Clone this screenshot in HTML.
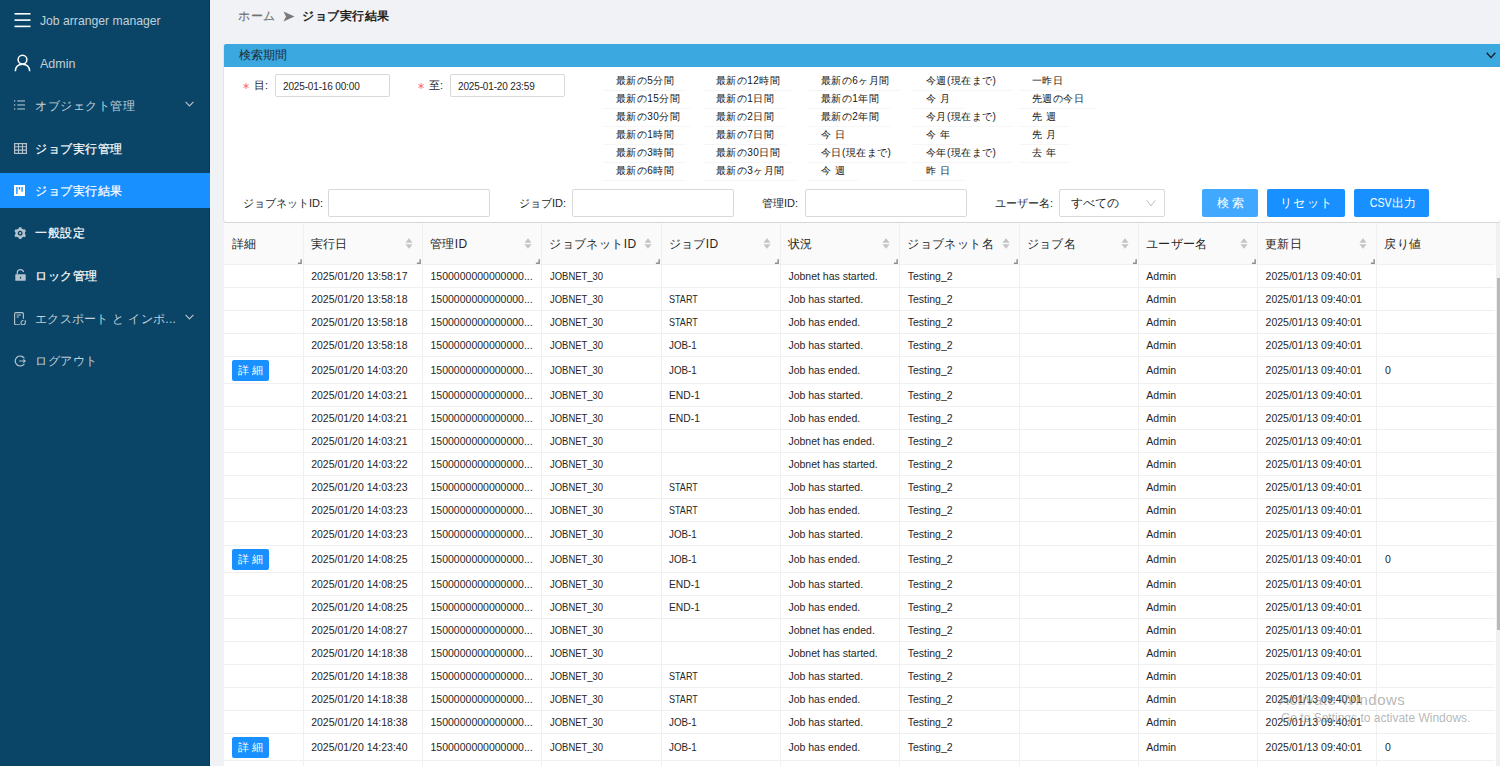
<!DOCTYPE html><html><head><meta charset="utf-8"><style>
*{margin:0;padding:0;box-sizing:border-box}
html,body{width:1500px;height:766px;overflow:hidden;background:#f0f2f5;font-family:"Liberation Sans", sans-serif;color:#262626}
.a{position:absolute;white-space:nowrap}
#side{position:absolute;left:0;top:0;width:210px;height:766px;background:#0a4567;box-shadow:inset -1px 0 0 #06395a}
.si{position:absolute;left:0;width:210px;height:35px;color:rgba(255,255,255,0.7);font-size:12px}
.si .t{position:absolute;left:35px;top:1px;line-height:35px;white-space:nowrap;letter-spacing:0.5px}
.si svg{position:absolute}
#panel{position:absolute;left:224px;top:44px;width:1276px;height:178px;background:#fff;border-radius:2px;box-shadow:0 1px 1px rgba(0,0,0,0.12),-0.5px 0 1px rgba(0,0,0,0.05)}
#phead{position:absolute;left:0;top:0;width:1276px;height:23px;background:#3ba8e0;border-radius:2px 0 0 0}
.inp{position:absolute;background:#fff;border:1px solid #d9d9d9;border-radius:2px}
.btn{position:absolute;top:145px;height:28px;border-radius:2px;background:#1890ff;color:#fff;font-size:12px;text-align:center;line-height:28px;white-space:nowrap}
.lbl{position:absolute;font-size:11px;color:#262626;white-space:nowrap;line-height:14px}
.q{position:absolute;font-size:10px;color:#141414;line-height:14px;white-space:nowrap;letter-spacing:0.45px}
.ql{position:absolute;height:1px;background:#f6f6f6}
#tbl{position:absolute;left:224px;top:223px;width:1272px;height:543px;background:#fff}
.th{position:absolute;font-size:12px;letter-spacing:0.4px;color:#262626;white-space:nowrap;line-height:14px}
.vl{position:absolute;width:1px;background:#f0f0f0}
.hl{position:absolute;height:1px;background:#f0f0f0}
.td{position:absolute;font-size:10.5px;color:#262626;white-space:nowrap;line-height:12px}
.db{position:absolute;left:8px;width:37px;height:21px;background:#1890ff;border-radius:2px;color:#fff;font-size:11px;line-height:21px;white-space:nowrap}
</style></head><body><div id="side">
<svg class="a" style="left:14px;top:12px" width="17" height="16" viewBox="0 0 17 16"><rect x="0.5" y="1" width="16" height="1.6" fill="#fff"/><rect x="0.5" y="7.3" width="16" height="1.6" fill="#fff"/><rect x="0.5" y="13.6" width="16" height="1.6" fill="#fff"/></svg>
<div class="a" style="left:40px;top:14px;font-size:12.2px;line-height:14px;color:rgba(255,255,255,0.75)">Job arranger manager</div>
<svg class="a" style="left:14px;top:54px" width="17" height="18" viewBox="0 0 17 18"><circle cx="8.5" cy="5.6" r="4.4" fill="none" stroke="#fff" stroke-width="1.5"/><path d="M1.3 17.2 C1.6 12.6 4.6 10.3 8.5 10.3 C12.4 10.3 15.4 12.6 15.7 17.2" fill="none" stroke="#fff" stroke-width="1.5"/></svg>
<div class="a" style="left:40px;top:57px;font-size:12.5px;line-height:14px;color:rgba(255,255,255,0.75)">Admin</div>
<div class="si" style="top:88px;color:rgba(255,255,255,0.75)"><svg style="left:14px;top:12px" width="12" height="10" viewBox="0 0 12 10"><rect x="0" y="0.3" width="1.3" height="1.3" fill="#b3c2cc"/><rect x="0" y="4.3" width="1.3" height="1.3" fill="#b3c2cc"/><rect x="0" y="8.3" width="1.3" height="1.3" fill="#b3c2cc"/><rect x="3.3" y="0.4" width="7.7" height="1.1" fill="#b3c2cc"/><rect x="3.3" y="4.4" width="7.7" height="1.1" fill="#b3c2cc"/><rect x="3.3" y="8.4" width="7.7" height="1.1" fill="#b3c2cc"/></svg><span class="t">オブジェクト管理</span><svg style="left:185px;top:13px" width="9" height="6" viewBox="0 0 9 6"><path d="M0.6 0.8L4.5 4.8L8.4 0.8" fill="none" stroke="#b3c2cc" stroke-width="1.2"/></svg></div>
<div class="si" style="top:131px;color:#fff"><svg style="left:13.5px;top:12px" width="13" height="11" viewBox="0 0 13 11"><rect x="0.6" y="0.6" width="11.8" height="9.8" fill="none" stroke="#b3c2cc" stroke-width="1.2"/><path d="M0.6 3.8H12.4M0.6 7.1H12.4M4.5 0.6V10.4M8.5 0.6V10.4" stroke="#b3c2cc" stroke-width="1.1"/></svg><span class="t" style="-webkit-text-stroke:0.2px #fff">ジョブ実行管理</span></div>
<div class="si" style="top:173px;background:#1890ff;color:#fff"><svg style="left:14px;top:12px" width="11" height="11" viewBox="0 0 11 11"><rect x="0" y="0" width="11" height="11" fill="#fff"/><rect x="2.2" y="2" width="1.4" height="7" fill="#1890ff"/><rect x="4.8" y="2" width="1.4" height="2.6" fill="#1890ff"/><rect x="7.4" y="2" width="1.4" height="4.6" fill="#1890ff"/></svg><span class="t" style="-webkit-text-stroke:0.2px #fff">ジョブ実行結果</span></div>
<div class="si" style="top:215px;color:#fff"><svg style="left:13.8px;top:11.8px" width="12.4" height="12.4" viewBox="0 0 12.4 12.4"><path fill="#b3c2cc" fill-rule="evenodd" d="M4.69 1.54 L5.12 0.20 L7.28 0.20 L7.71 1.54 L9.48 2.56 L10.86 2.26 L11.94 4.13 L10.99 5.18 L10.99 7.22 L11.94 8.27 L10.86 10.14 L9.48 9.84 L7.71 10.86 L7.28 12.20 L5.12 12.20 L4.69 10.86 L2.92 9.84 L1.54 10.14 L0.46 8.27 L1.41 7.22 L1.41 5.18 L0.46 4.13 L1.54 2.26 L2.92 2.56Z M6.2 3.7A2.5 2.5 0 1 0 6.2 8.7A2.5 2.5 0 1 0 6.2 3.7Z M6.2 5.1A1.1 1.1 0 1 0 6.2 7.300000000000001A1.1 1.1 0 1 0 6.2 5.1Z"/></svg><span class="t" style="-webkit-text-stroke:0.2px #fff">一般設定</span></div>
<div class="si" style="top:258px;color:#fff"><svg style="left:14.5px;top:11px" width="11" height="12" viewBox="0 0 11 12"><path d="M2.3 5.2V3.6C2.3 1.8 3.7 0.6 5.4 0.6C7.1 0.6 8.3 1.6 8.5 3.1" fill="none" stroke="#b3c2cc" stroke-width="1.2"/><rect x="0.3" y="5.2" width="10.4" height="6.6" rx="0.5" fill="#b3c2cc"/><rect x="4.9" y="7.8" width="1.2" height="1.8" fill="#0b4466"/></svg><span class="t" style="-webkit-text-stroke:0.2px #fff">ロック管理</span></div>
<div class="si" style="top:301px;color:rgba(255,255,255,0.75)"><svg style="left:14.2px;top:10.5px" width="12" height="13.5" viewBox="0 0 12 13.5"><path d="M6.2 12.7H1.9Q0.6 12.7 0.6 11.4V1.9Q0.6 0.6 1.9 0.6H8.1Q9.4 0.6 9.4 1.9V6.8" fill="none" stroke="#b3c2cc" stroke-width="1.15"/><path d="M2.6 3H6.9M2.6 5H5" stroke="#b3c2cc" stroke-width="1.1"/><path d="M11.0 9.6A2.2 2.2 0 1 1 9.48 8.53" fill="none" stroke="#b3c2cc" stroke-width="1.1"/><path d="M10.2 8.9L11.9 9.9L11.9 8.0Z" fill="#b3c2cc"/></svg><span class="t" style="letter-spacing:0.3px">エクスポート と インポ...</span><svg style="left:185px;top:13px" width="9" height="6" viewBox="0 0 9 6"><path d="M0.6 0.8L4.5 4.8L8.4 0.8" fill="none" stroke="#b3c2cc" stroke-width="1.2"/></svg></div>
<div class="si" style="top:343px;color:rgba(255,255,255,0.75)"><svg style="left:14px;top:12px" width="12" height="12" viewBox="0 0 12 12"><path d="M10.4 3.3A5 5 0 1 0 10.4 8.7" fill="none" stroke="#b3c2cc" stroke-width="1.2"/><path d="M5.2 6H11.2M9.4 4.3L11.2 6L9.4 7.7" fill="none" stroke="#b3c2cc" stroke-width="1.1"/></svg><span class="t">ログアウト</span></div>
</div>
<div class="a" style="left:238px;top:9px;font-size:12px;letter-spacing:0.6px;line-height:14px;color:#707070;-webkit-text-stroke:0.15px #707070">ホーム</div>
<svg class="a" style="left:283px;top:11px" width="12" height="11" viewBox="0 0 12 11"><path d="M0.5 0.5L11.5 5.5L0.5 10.5L3 5.5Z" fill="#7a7a7a"/></svg>
<div class="a" style="left:302px;top:9px;font-size:12.3px;line-height:14px;font-weight:bold;color:#1f1f1f;letter-spacing:0.5px">ジョブ実行結果</div>
<div id="panel"><div id="phead"><span class="a" style="left:15px;top:4px;font-size:12px;line-height:14px;color:#1d2d38">検索期間</span><svg class="a" style="left:1261.5px;top:8px" width="10" height="7" viewBox="0 0 10 7"><path d="M0.7 0.8L5 5.6L9.3 0.8" fill="none" stroke="#1a1a1a" stroke-width="1.3"/></svg></div><svg class="a" style="left:19px;top:39px" width="6" height="6" viewBox="0 0 6 6"><path d="M3 0V6M0.4 1.5L5.6 4.5M0.4 4.5L5.6 1.5" stroke="#ff4d4f" stroke-width="0.75"/></svg><span class="lbl" style="left:30px;top:34px">目:</span><div class="inp" style="left:51px;top:30px;width:115px;height:23px"></div><span class="a" style="left:59px;top:37px;font-size:10px;line-height:11px;color:#262626;letter-spacing:-0.15px">2025-01-16 00:00</span><svg class="a" style="left:194px;top:39px" width="6" height="6" viewBox="0 0 6 6"><path d="M3 0V6M0.4 1.5L5.6 4.5M0.4 4.5L5.6 1.5" stroke="#ff4d4f" stroke-width="0.75"/></svg><span class="lbl" style="left:205px;top:34px">至:</span><div class="inp" style="left:226px;top:30px;width:115px;height:23px"></div><span class="a" style="left:234px;top:37px;font-size:10px;line-height:11px;color:#262626;letter-spacing:-0.15px">2025-01-20 23:59</span><span class="q" style="left:392px;top:30px">最新の5分間</span><div class="ql" style="left:379px;top:46px;width:83px"></div><span class="q" style="left:392px;top:48px">最新の15分間</span><div class="ql" style="left:379px;top:64px;width:88px"></div><span class="q" style="left:392px;top:66px">最新の30分間</span><div class="ql" style="left:379px;top:82px;width:88px"></div><span class="q" style="left:392px;top:84px">最新の1時間</span><div class="ql" style="left:379px;top:100px;width:83px"></div><span class="q" style="left:392px;top:102px">最新の3時間</span><div class="ql" style="left:379px;top:118px;width:83px"></div><span class="q" style="left:392px;top:120px">最新の6時間</span><div class="ql" style="left:379px;top:136px;width:83px"></div><span class="q" style="left:492px;top:30px">最新の12時間</span><div class="ql" style="left:479px;top:46px;width:88px"></div><span class="q" style="left:492px;top:48px">最新の1日間</span><div class="ql" style="left:479px;top:64px;width:83px"></div><span class="q" style="left:492px;top:66px">最新の2日間</span><div class="ql" style="left:479px;top:82px;width:83px"></div><span class="q" style="left:492px;top:84px">最新の7日間</span><div class="ql" style="left:479px;top:100px;width:83px"></div><span class="q" style="left:492px;top:102px">最新の30日間</span><div class="ql" style="left:479px;top:118px;width:88px"></div><span class="q" style="left:492px;top:120px">最新の3ヶ月間</span><div class="ql" style="left:479px;top:136px;width:93px"></div><span class="q" style="left:597px;top:30px">最新の6ヶ月間</span><div class="ql" style="left:584px;top:46px;width:93px"></div><span class="q" style="left:597px;top:48px">最新の1年間</span><div class="ql" style="left:584px;top:64px;width:83px"></div><span class="q" style="left:597px;top:66px">最新の2年間</span><div class="ql" style="left:584px;top:82px;width:83px"></div><span class="q" style="left:597px;top:84px">今 日</span><div class="ql" style="left:584px;top:100px;width:51px"></div><span class="q" style="left:597px;top:102px">今日(現在まで)</span><div class="ql" style="left:584px;top:118px;width:99px"></div><span class="q" style="left:597px;top:120px">今 週</span><div class="ql" style="left:584px;top:136px;width:51px"></div><span class="q" style="left:702px;top:30px">今週(現在まで)</span><div class="ql" style="left:689px;top:46px;width:99px"></div><span class="q" style="left:702px;top:48px">今 月</span><div class="ql" style="left:689px;top:64px;width:51px"></div><span class="q" style="left:702px;top:66px">今月(現在まで)</span><div class="ql" style="left:689px;top:82px;width:99px"></div><span class="q" style="left:702px;top:84px">今 年</span><div class="ql" style="left:689px;top:100px;width:51px"></div><span class="q" style="left:702px;top:102px">今年(現在まで)</span><div class="ql" style="left:689px;top:118px;width:99px"></div><span class="q" style="left:702px;top:120px">昨 日</span><div class="ql" style="left:689px;top:136px;width:51px"></div><span class="q" style="left:808px;top:30px">一昨日</span><div class="ql" style="left:795px;top:46px;width:56px"></div><span class="q" style="left:808px;top:48px">先週の今日</span><div class="ql" style="left:795px;top:64px;width:77px"></div><span class="q" style="left:808px;top:66px">先 週</span><div class="ql" style="left:795px;top:82px;width:51px"></div><span class="q" style="left:808px;top:84px">先 月</span><div class="ql" style="left:795px;top:100px;width:51px"></div><span class="q" style="left:808px;top:102px">去 年</span><div class="ql" style="left:795px;top:118px;width:51px"></div></div>
<div id="row2">
<span class="lbl a" style="left:243px;top:196px">ジョブネットID:</span>
<div class="inp" style="left:328px;top:189px;width:162px;height:28px"></div>
<span class="lbl a" style="left:519px;top:196px">ジョブID:</span>
<div class="inp" style="left:572px;top:189px;width:162px;height:28px"></div>
<span class="lbl a" style="left:762px;top:196px">管理ID:</span>
<div class="inp" style="left:805px;top:189px;width:162px;height:28px"></div>
<span class="lbl a" style="left:995px;top:196px">ユーザー名:</span>
<div class="inp" style="left:1059px;top:189px;width:106px;height:28px"></div>
<span class="a" style="left:1071px;top:196px;font-size:12px;line-height:14px;color:#262626">すべての</span>
<svg class="a" style="left:1146px;top:199px" width="10" height="8" viewBox="0 0 10 8"><path d="M0.8 1.2L5 7L9.2 1.2" fill="none" stroke="#bfbfbf" stroke-width="1"/></svg>
<div class="btn" style="left:1202px;top:189px;width:56px;background:#40a9ff;letter-spacing:3px;text-indent:3px">検索</div>
<div class="btn" style="left:1267px;top:189px;width:78px;letter-spacing:1.6px;text-indent:1.6px">リセット</div>
<div class="btn" style="left:1354px;top:189px;width:75px"><span style="display:inline-block;transform:scaleX(0.89);transform-origin:100% 50%">CSV</span>出力</div>
</div>
<div id="tbl"><div class="a" style="left:0;top:0;width:1272px;height:41px;background:#fafafa"></div><span class="th" style="left:8.0px;top:14px">詳細</span><svg class="a" style="left:72.7px;top:36px" width="5" height="5" viewBox="0 0 5 5"><path d="M3.4 0.3H4.9V4.9H0.9V3.6H3.4Z" fill="#8f8f8f"/></svg><span class="th" style="left:86.7px;top:14px">実行日</span><svg class="a" style="left:181.0px;top:15px" width="8" height="11" viewBox="0 0 8 11"><path d="M4 0.3L7.6 4.7H0.4Z" fill="#c4c4c4"/><path d="M4 10.7L7.6 6.3H0.4Z" fill="#c4c4c4"/></svg><svg class="a" style="left:192.0px;top:36px" width="5" height="5" viewBox="0 0 5 5"><path d="M3.4 0.3H4.9V4.9H0.9V3.6H3.4Z" fill="#8f8f8f"/></svg><span class="th" style="left:206.0px;top:14px">管理ID</span><svg class="a" style="left:300.3px;top:15px" width="8" height="11" viewBox="0 0 8 11"><path d="M4 0.3L7.6 4.7H0.4Z" fill="#c4c4c4"/><path d="M4 10.7L7.6 6.3H0.4Z" fill="#c4c4c4"/></svg><svg class="a" style="left:311.3px;top:36px" width="5" height="5" viewBox="0 0 5 5"><path d="M3.4 0.3H4.9V4.9H0.9V3.6H3.4Z" fill="#8f8f8f"/></svg><span class="th" style="left:325.3px;top:14px">ジョブネットID</span><svg class="a" style="left:419.6px;top:15px" width="8" height="11" viewBox="0 0 8 11"><path d="M4 0.3L7.6 4.7H0.4Z" fill="#c4c4c4"/><path d="M4 10.7L7.6 6.3H0.4Z" fill="#c4c4c4"/></svg><svg class="a" style="left:430.6px;top:36px" width="5" height="5" viewBox="0 0 5 5"><path d="M3.4 0.3H4.9V4.9H0.9V3.6H3.4Z" fill="#8f8f8f"/></svg><span class="th" style="left:444.6px;top:14px">ジョブID</span><svg class="a" style="left:538.9px;top:15px" width="8" height="11" viewBox="0 0 8 11"><path d="M4 0.3L7.6 4.7H0.4Z" fill="#c4c4c4"/><path d="M4 10.7L7.6 6.3H0.4Z" fill="#c4c4c4"/></svg><svg class="a" style="left:549.9px;top:36px" width="5" height="5" viewBox="0 0 5 5"><path d="M3.4 0.3H4.9V4.9H0.9V3.6H3.4Z" fill="#8f8f8f"/></svg><span class="th" style="left:563.9px;top:14px">状況</span><svg class="a" style="left:658.2px;top:15px" width="8" height="11" viewBox="0 0 8 11"><path d="M4 0.3L7.6 4.7H0.4Z" fill="#c4c4c4"/><path d="M4 10.7L7.6 6.3H0.4Z" fill="#c4c4c4"/></svg><svg class="a" style="left:669.2px;top:36px" width="5" height="5" viewBox="0 0 5 5"><path d="M3.4 0.3H4.9V4.9H0.9V3.6H3.4Z" fill="#8f8f8f"/></svg><span class="th" style="left:683.2px;top:14px">ジョブネット名</span><svg class="a" style="left:777.5px;top:15px" width="8" height="11" viewBox="0 0 8 11"><path d="M4 0.3L7.6 4.7H0.4Z" fill="#c4c4c4"/><path d="M4 10.7L7.6 6.3H0.4Z" fill="#c4c4c4"/></svg><svg class="a" style="left:788.5px;top:36px" width="5" height="5" viewBox="0 0 5 5"><path d="M3.4 0.3H4.9V4.9H0.9V3.6H3.4Z" fill="#8f8f8f"/></svg><span class="th" style="left:802.5px;top:14px">ジョブ名</span><svg class="a" style="left:896.8px;top:15px" width="8" height="11" viewBox="0 0 8 11"><path d="M4 0.3L7.6 4.7H0.4Z" fill="#c4c4c4"/><path d="M4 10.7L7.6 6.3H0.4Z" fill="#c4c4c4"/></svg><svg class="a" style="left:907.8px;top:36px" width="5" height="5" viewBox="0 0 5 5"><path d="M3.4 0.3H4.9V4.9H0.9V3.6H3.4Z" fill="#8f8f8f"/></svg><span class="th" style="left:921.8px;top:14px">ユーザー名</span><svg class="a" style="left:1016.1px;top:15px" width="8" height="11" viewBox="0 0 8 11"><path d="M4 0.3L7.6 4.7H0.4Z" fill="#c4c4c4"/><path d="M4 10.7L7.6 6.3H0.4Z" fill="#c4c4c4"/></svg><svg class="a" style="left:1027.1px;top:36px" width="5" height="5" viewBox="0 0 5 5"><path d="M3.4 0.3H4.9V4.9H0.9V3.6H3.4Z" fill="#8f8f8f"/></svg><span class="th" style="left:1041.1px;top:14px">更新日</span><svg class="a" style="left:1135.4px;top:15px" width="8" height="11" viewBox="0 0 8 11"><path d="M4 0.3L7.6 4.7H0.4Z" fill="#c4c4c4"/><path d="M4 10.7L7.6 6.3H0.4Z" fill="#c4c4c4"/></svg><svg class="a" style="left:1146.4px;top:36px" width="5" height="5" viewBox="0 0 5 5"><path d="M3.4 0.3H4.9V4.9H0.9V3.6H3.4Z" fill="#8f8f8f"/></svg><span class="th" style="left:1160.4px;top:14px">戻り値</span><div class="vl" style="left:78.7px;top:0;height:543px"></div><div class="vl" style="left:198.0px;top:0;height:543px"></div><div class="vl" style="left:317.3px;top:0;height:543px"></div><div class="vl" style="left:436.6px;top:0;height:543px"></div><div class="vl" style="left:555.9px;top:0;height:543px"></div><div class="vl" style="left:675.2px;top:0;height:543px"></div><div class="vl" style="left:794.5px;top:0;height:543px"></div><div class="vl" style="left:913.8px;top:0;height:543px"></div><div class="vl" style="left:1033.1px;top:0;height:543px"></div><div class="vl" style="left:1152.4px;top:0;height:543px"></div><div class="hl" style="left:0;top:41px;width:1271px"></div><div class="hl" style="left:0;top:64px;width:1271px"></div><div class="hl" style="left:0;top:87px;width:1271px"></div><div class="hl" style="left:0;top:110px;width:1271px"></div><div class="hl" style="left:0;top:133px;width:1271px"></div><div class="hl" style="left:0;top:160px;width:1271px"></div><div class="hl" style="left:0;top:183px;width:1271px"></div><div class="hl" style="left:0;top:206px;width:1271px"></div><div class="hl" style="left:0;top:229px;width:1271px"></div><div class="hl" style="left:0;top:252px;width:1271px"></div><div class="hl" style="left:0;top:275px;width:1271px"></div><div class="hl" style="left:0;top:298px;width:1271px"></div><div class="hl" style="left:0;top:322px;width:1271px"></div><div class="hl" style="left:0;top:349px;width:1271px"></div><div class="hl" style="left:0;top:372px;width:1271px"></div><div class="hl" style="left:0;top:395px;width:1271px"></div><div class="hl" style="left:0;top:418px;width:1271px"></div><div class="hl" style="left:0;top:441px;width:1271px"></div><div class="hl" style="left:0;top:464px;width:1271px"></div><div class="hl" style="left:0;top:487px;width:1271px"></div><div class="hl" style="left:0;top:510px;width:1271px"></div><div class="hl" style="left:0;top:537px;width:1271px"></div><span class="td" style="left:87.2px;top:47.0px">2025/01/20 13:58:17</span><span class="td" style="left:206.5px;top:47.0px">1500000000000000...</span><span class="td" style="left:325.8px;top:47.0px;transform:scaleX(0.9);transform-origin:0 0">JOBNET_30</span><span class="td" style="left:564.4px;top:47.0px">Jobnet has started.</span><span class="td" style="left:683.7px;top:47.0px">Testing_2</span><span class="td" style="left:922.3px;top:47.0px">Admin</span><span class="td" style="left:1041.6px;top:47.0px">2025/01/13 09:40:01</span><span class="td" style="left:87.2px;top:70.0px">2025/01/20 13:58:18</span><span class="td" style="left:206.5px;top:70.0px">1500000000000000...</span><span class="td" style="left:325.8px;top:70.0px;transform:scaleX(0.9);transform-origin:0 0">JOBNET_30</span><span class="td" style="left:445.1px;top:70.0px;transform:scaleX(0.86);transform-origin:0 0">START</span><span class="td" style="left:564.4px;top:70.0px">Job has started.</span><span class="td" style="left:683.7px;top:70.0px">Testing_2</span><span class="td" style="left:922.3px;top:70.0px">Admin</span><span class="td" style="left:1041.6px;top:70.0px">2025/01/13 09:40:01</span><span class="td" style="left:87.2px;top:93.0px">2025/01/20 13:58:18</span><span class="td" style="left:206.5px;top:93.0px">1500000000000000...</span><span class="td" style="left:325.8px;top:93.0px;transform:scaleX(0.9);transform-origin:0 0">JOBNET_30</span><span class="td" style="left:445.1px;top:93.0px;transform:scaleX(0.86);transform-origin:0 0">START</span><span class="td" style="left:564.4px;top:93.0px">Job has ended.</span><span class="td" style="left:683.7px;top:93.0px">Testing_2</span><span class="td" style="left:922.3px;top:93.0px">Admin</span><span class="td" style="left:1041.6px;top:93.0px">2025/01/13 09:40:01</span><span class="td" style="left:87.2px;top:116.0px">2025/01/20 13:58:18</span><span class="td" style="left:206.5px;top:116.0px">1500000000000000...</span><span class="td" style="left:325.8px;top:116.0px;transform:scaleX(0.9);transform-origin:0 0">JOBNET_30</span><span class="td" style="left:445.1px;top:116.0px;transform:scaleX(0.93);transform-origin:0 0">JOB-1</span><span class="td" style="left:564.4px;top:116.0px">Job has started.</span><span class="td" style="left:683.7px;top:116.0px">Testing_2</span><span class="td" style="left:922.3px;top:116.0px">Admin</span><span class="td" style="left:1041.6px;top:116.0px">2025/01/13 09:40:01</span><span class="td" style="left:87.2px;top:141.0px">2025/01/20 14:03:20</span><span class="td" style="left:206.5px;top:141.0px">1500000000000000...</span><span class="td" style="left:325.8px;top:141.0px;transform:scaleX(0.9);transform-origin:0 0">JOBNET_30</span><span class="td" style="left:445.1px;top:141.0px;transform:scaleX(0.93);transform-origin:0 0">JOB-1</span><span class="td" style="left:564.4px;top:141.0px">Job has ended.</span><span class="td" style="left:683.7px;top:141.0px">Testing_2</span><span class="td" style="left:922.3px;top:141.0px">Admin</span><span class="td" style="left:1041.6px;top:141.0px">2025/01/13 09:40:01</span><span class="td" style="left:1160.9px;top:141.0px">0</span><div class="db" style="top:136.5px"><span style="position:absolute;left:6px">詳</span><span style="position:absolute;left:20px">細</span></div><span class="td" style="left:87.2px;top:166.0px">2025/01/20 14:03:21</span><span class="td" style="left:206.5px;top:166.0px">1500000000000000...</span><span class="td" style="left:325.8px;top:166.0px;transform:scaleX(0.9);transform-origin:0 0">JOBNET_30</span><span class="td" style="left:445.1px;top:166.0px;transform:scaleX(0.98);transform-origin:0 0">END-1</span><span class="td" style="left:564.4px;top:166.0px">Job has started.</span><span class="td" style="left:683.7px;top:166.0px">Testing_2</span><span class="td" style="left:922.3px;top:166.0px">Admin</span><span class="td" style="left:1041.6px;top:166.0px">2025/01/13 09:40:01</span><span class="td" style="left:87.2px;top:189.0px">2025/01/20 14:03:21</span><span class="td" style="left:206.5px;top:189.0px">1500000000000000...</span><span class="td" style="left:325.8px;top:189.0px;transform:scaleX(0.9);transform-origin:0 0">JOBNET_30</span><span class="td" style="left:445.1px;top:189.0px;transform:scaleX(0.98);transform-origin:0 0">END-1</span><span class="td" style="left:564.4px;top:189.0px">Job has ended.</span><span class="td" style="left:683.7px;top:189.0px">Testing_2</span><span class="td" style="left:922.3px;top:189.0px">Admin</span><span class="td" style="left:1041.6px;top:189.0px">2025/01/13 09:40:01</span><span class="td" style="left:87.2px;top:212.0px">2025/01/20 14:03:21</span><span class="td" style="left:206.5px;top:212.0px">1500000000000000...</span><span class="td" style="left:325.8px;top:212.0px;transform:scaleX(0.9);transform-origin:0 0">JOBNET_30</span><span class="td" style="left:564.4px;top:212.0px">Jobnet has ended.</span><span class="td" style="left:683.7px;top:212.0px">Testing_2</span><span class="td" style="left:922.3px;top:212.0px">Admin</span><span class="td" style="left:1041.6px;top:212.0px">2025/01/13 09:40:01</span><span class="td" style="left:87.2px;top:235.0px">2025/01/20 14:03:22</span><span class="td" style="left:206.5px;top:235.0px">1500000000000000...</span><span class="td" style="left:325.8px;top:235.0px;transform:scaleX(0.9);transform-origin:0 0">JOBNET_30</span><span class="td" style="left:564.4px;top:235.0px">Jobnet has started.</span><span class="td" style="left:683.7px;top:235.0px">Testing_2</span><span class="td" style="left:922.3px;top:235.0px">Admin</span><span class="td" style="left:1041.6px;top:235.0px">2025/01/13 09:40:01</span><span class="td" style="left:87.2px;top:258.0px">2025/01/20 14:03:23</span><span class="td" style="left:206.5px;top:258.0px">1500000000000000...</span><span class="td" style="left:325.8px;top:258.0px;transform:scaleX(0.9);transform-origin:0 0">JOBNET_30</span><span class="td" style="left:445.1px;top:258.0px;transform:scaleX(0.86);transform-origin:0 0">START</span><span class="td" style="left:564.4px;top:258.0px">Job has started.</span><span class="td" style="left:683.7px;top:258.0px">Testing_2</span><span class="td" style="left:922.3px;top:258.0px">Admin</span><span class="td" style="left:1041.6px;top:258.0px">2025/01/13 09:40:01</span><span class="td" style="left:87.2px;top:281.0px">2025/01/20 14:03:23</span><span class="td" style="left:206.5px;top:281.0px">1500000000000000...</span><span class="td" style="left:325.8px;top:281.0px;transform:scaleX(0.9);transform-origin:0 0">JOBNET_30</span><span class="td" style="left:445.1px;top:281.0px;transform:scaleX(0.86);transform-origin:0 0">START</span><span class="td" style="left:564.4px;top:281.0px">Job has ended.</span><span class="td" style="left:683.7px;top:281.0px">Testing_2</span><span class="td" style="left:922.3px;top:281.0px">Admin</span><span class="td" style="left:1041.6px;top:281.0px">2025/01/13 09:40:01</span><span class="td" style="left:87.2px;top:304.5px">2025/01/20 14:03:23</span><span class="td" style="left:206.5px;top:304.5px">1500000000000000...</span><span class="td" style="left:325.8px;top:304.5px;transform:scaleX(0.9);transform-origin:0 0">JOBNET_30</span><span class="td" style="left:445.1px;top:304.5px;transform:scaleX(0.93);transform-origin:0 0">JOB-1</span><span class="td" style="left:564.4px;top:304.5px">Job has started.</span><span class="td" style="left:683.7px;top:304.5px">Testing_2</span><span class="td" style="left:922.3px;top:304.5px">Admin</span><span class="td" style="left:1041.6px;top:304.5px">2025/01/13 09:40:01</span><span class="td" style="left:87.2px;top:330.0px">2025/01/20 14:08:25</span><span class="td" style="left:206.5px;top:330.0px">1500000000000000...</span><span class="td" style="left:325.8px;top:330.0px;transform:scaleX(0.9);transform-origin:0 0">JOBNET_30</span><span class="td" style="left:445.1px;top:330.0px;transform:scaleX(0.93);transform-origin:0 0">JOB-1</span><span class="td" style="left:564.4px;top:330.0px">Job has ended.</span><span class="td" style="left:683.7px;top:330.0px">Testing_2</span><span class="td" style="left:922.3px;top:330.0px">Admin</span><span class="td" style="left:1041.6px;top:330.0px">2025/01/13 09:40:01</span><span class="td" style="left:1160.9px;top:330.0px">0</span><div class="db" style="top:325.5px"><span style="position:absolute;left:6px">詳</span><span style="position:absolute;left:20px">細</span></div><span class="td" style="left:87.2px;top:355.0px">2025/01/20 14:08:25</span><span class="td" style="left:206.5px;top:355.0px">1500000000000000...</span><span class="td" style="left:325.8px;top:355.0px;transform:scaleX(0.9);transform-origin:0 0">JOBNET_30</span><span class="td" style="left:445.1px;top:355.0px;transform:scaleX(0.98);transform-origin:0 0">END-1</span><span class="td" style="left:564.4px;top:355.0px">Job has started.</span><span class="td" style="left:683.7px;top:355.0px">Testing_2</span><span class="td" style="left:922.3px;top:355.0px">Admin</span><span class="td" style="left:1041.6px;top:355.0px">2025/01/13 09:40:01</span><span class="td" style="left:87.2px;top:378.0px">2025/01/20 14:08:25</span><span class="td" style="left:206.5px;top:378.0px">1500000000000000...</span><span class="td" style="left:325.8px;top:378.0px;transform:scaleX(0.9);transform-origin:0 0">JOBNET_30</span><span class="td" style="left:445.1px;top:378.0px;transform:scaleX(0.98);transform-origin:0 0">END-1</span><span class="td" style="left:564.4px;top:378.0px">Job has ended.</span><span class="td" style="left:683.7px;top:378.0px">Testing_2</span><span class="td" style="left:922.3px;top:378.0px">Admin</span><span class="td" style="left:1041.6px;top:378.0px">2025/01/13 09:40:01</span><span class="td" style="left:87.2px;top:401.0px">2025/01/20 14:08:27</span><span class="td" style="left:206.5px;top:401.0px">1500000000000000...</span><span class="td" style="left:325.8px;top:401.0px;transform:scaleX(0.9);transform-origin:0 0">JOBNET_30</span><span class="td" style="left:564.4px;top:401.0px">Jobnet has ended.</span><span class="td" style="left:683.7px;top:401.0px">Testing_2</span><span class="td" style="left:922.3px;top:401.0px">Admin</span><span class="td" style="left:1041.6px;top:401.0px">2025/01/13 09:40:01</span><span class="td" style="left:87.2px;top:424.0px">2025/01/20 14:18:38</span><span class="td" style="left:206.5px;top:424.0px">1500000000000000...</span><span class="td" style="left:325.8px;top:424.0px;transform:scaleX(0.9);transform-origin:0 0">JOBNET_30</span><span class="td" style="left:564.4px;top:424.0px">Jobnet has started.</span><span class="td" style="left:683.7px;top:424.0px">Testing_2</span><span class="td" style="left:922.3px;top:424.0px">Admin</span><span class="td" style="left:1041.6px;top:424.0px">2025/01/13 09:40:01</span><span class="td" style="left:87.2px;top:447.0px">2025/01/20 14:18:38</span><span class="td" style="left:206.5px;top:447.0px">1500000000000000...</span><span class="td" style="left:325.8px;top:447.0px;transform:scaleX(0.9);transform-origin:0 0">JOBNET_30</span><span class="td" style="left:445.1px;top:447.0px;transform:scaleX(0.86);transform-origin:0 0">START</span><span class="td" style="left:564.4px;top:447.0px">Job has started.</span><span class="td" style="left:683.7px;top:447.0px">Testing_2</span><span class="td" style="left:922.3px;top:447.0px">Admin</span><span class="td" style="left:1041.6px;top:447.0px">2025/01/13 09:40:01</span><span class="td" style="left:87.2px;top:470.0px">2025/01/20 14:18:38</span><span class="td" style="left:206.5px;top:470.0px">1500000000000000...</span><span class="td" style="left:325.8px;top:470.0px;transform:scaleX(0.9);transform-origin:0 0">JOBNET_30</span><span class="td" style="left:445.1px;top:470.0px;transform:scaleX(0.86);transform-origin:0 0">START</span><span class="td" style="left:564.4px;top:470.0px">Job has ended.</span><span class="td" style="left:683.7px;top:470.0px">Testing_2</span><span class="td" style="left:922.3px;top:470.0px">Admin</span><span class="td" style="left:1041.6px;top:470.0px">2025/01/13 09:40:01</span><span class="td" style="left:87.2px;top:493.0px">2025/01/20 14:18:38</span><span class="td" style="left:206.5px;top:493.0px">1500000000000000...</span><span class="td" style="left:325.8px;top:493.0px;transform:scaleX(0.9);transform-origin:0 0">JOBNET_30</span><span class="td" style="left:445.1px;top:493.0px;transform:scaleX(0.93);transform-origin:0 0">JOB-1</span><span class="td" style="left:564.4px;top:493.0px">Job has started.</span><span class="td" style="left:683.7px;top:493.0px">Testing_2</span><span class="td" style="left:922.3px;top:493.0px">Admin</span><span class="td" style="left:1041.6px;top:493.0px">2025/01/13 09:40:01</span><span class="td" style="left:87.2px;top:518.0px">2025/01/20 14:23:40</span><span class="td" style="left:206.5px;top:518.0px">1500000000000000...</span><span class="td" style="left:325.8px;top:518.0px;transform:scaleX(0.9);transform-origin:0 0">JOBNET_30</span><span class="td" style="left:445.1px;top:518.0px;transform:scaleX(0.93);transform-origin:0 0">JOB-1</span><span class="td" style="left:564.4px;top:518.0px">Job has ended.</span><span class="td" style="left:683.7px;top:518.0px">Testing_2</span><span class="td" style="left:922.3px;top:518.0px">Admin</span><span class="td" style="left:1041.6px;top:518.0px">2025/01/13 09:40:01</span><span class="td" style="left:1160.9px;top:518.0px">0</span><div class="db" style="top:513.5px"><span style="position:absolute;left:6px">詳</span><span style="position:absolute;left:20px">細</span></div></div>
<div class="a" style="left:1496px;top:223px;width:4px;height:543px;background:#f0f0f0"></div>
<div class="a" style="left:1497px;top:278px;width:3px;height:352px;background:#b9b9b9"></div>
<div class="a" style="left:1279px;top:691px;font-size:15px;line-height:17px;letter-spacing:0.5px;color:rgba(120,120,120,0.55)">Activate Windows</div>
<div class="a" style="left:1281px;top:711px;font-size:12px;line-height:14px;color:rgba(120,120,120,0.55)">Go to Settings to activate Windows.</div></body></html>
